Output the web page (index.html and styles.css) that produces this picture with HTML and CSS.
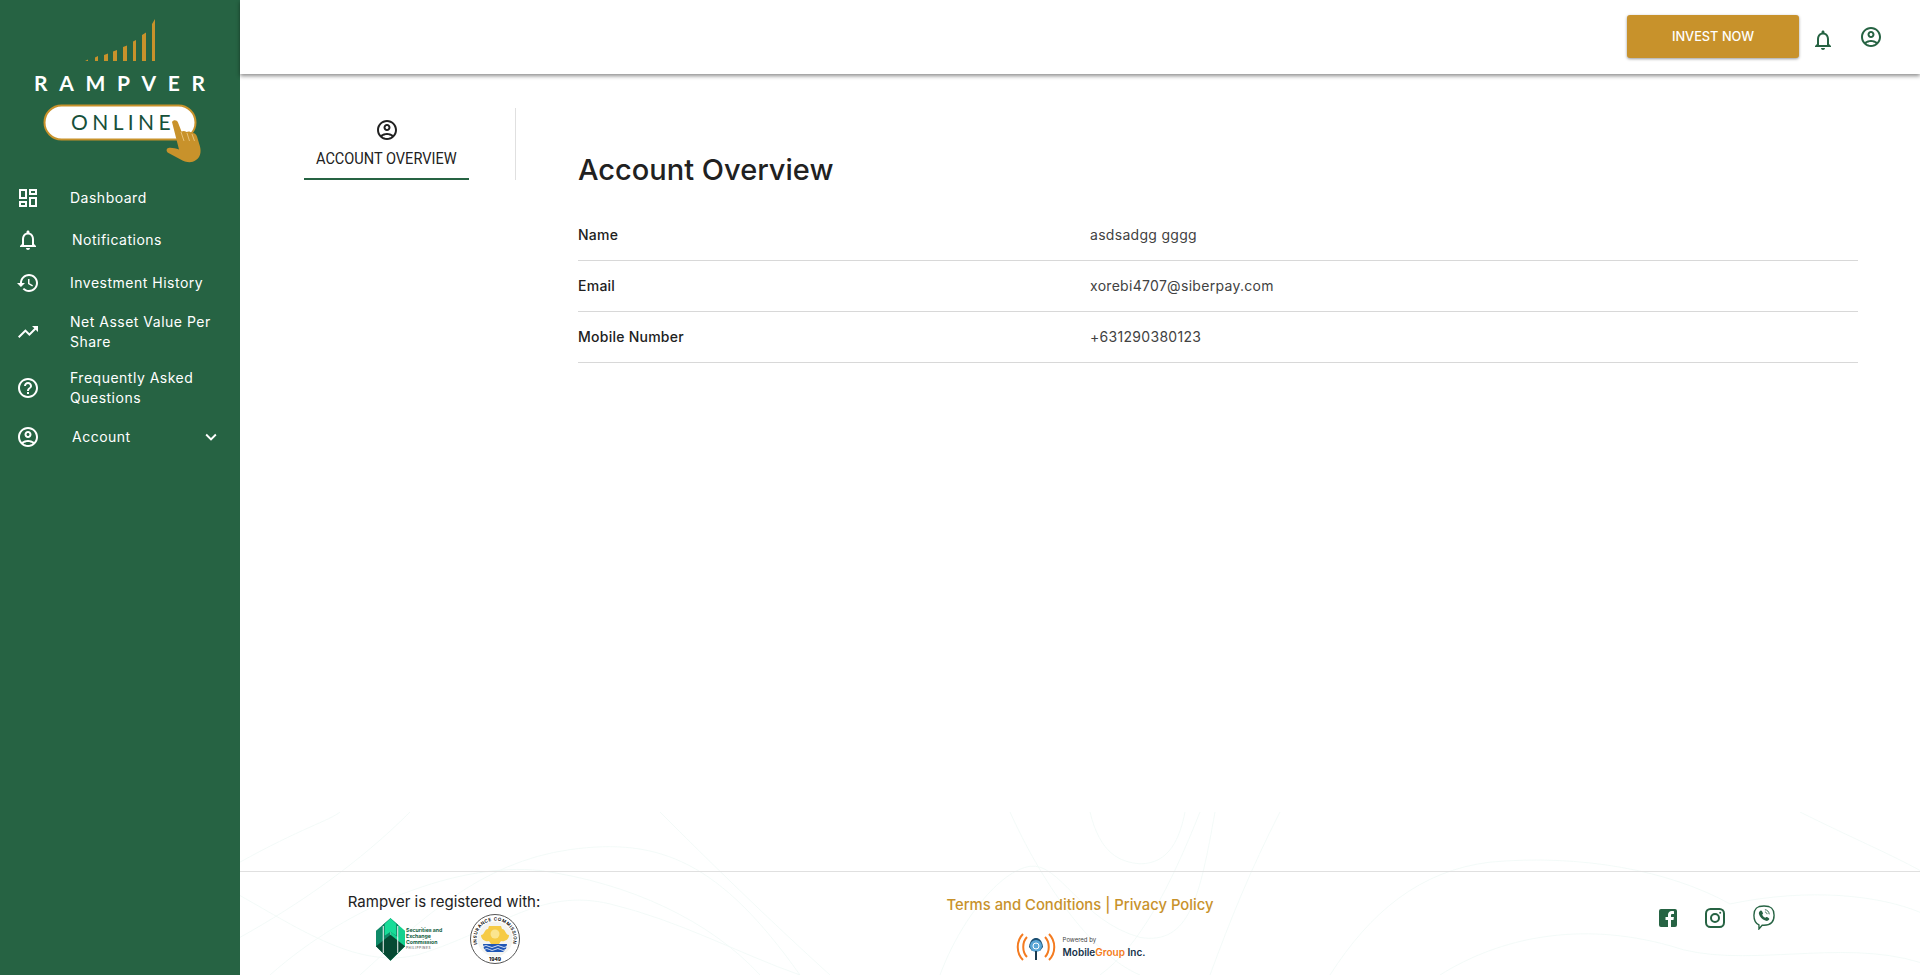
FILE: index.html
```html
<!DOCTYPE html>
<html lang="en">

<head>
    <meta charset="utf-8">
    <title>Account Overview</title>
    <link rel="stylesheet" href="styles.css">
</head>

<body>
<svg class="icon-defs" width="0" height="0">
    <symbol id="i-dashboard" viewBox="0 0 24 24"><path d="M19 5v2h-4V5h4M9 5v6H5V5h4m10 8v6h-4v-6h4M9 17v2H5v-2h4M21 3h-8v6h8V3zM11 3H3v10h8V3zm10 8h-8v10h8V11zm-10 4H3v6h8v-6z"/></symbol>
    <symbol id="i-bell" viewBox="0 0 24 24"><path d="M12 22c1.1 0 2-.9 2-2h-4c0 1.1.9 2 2 2zm6-6v-5c0-3.07-1.63-5.64-4.5-6.32V4c0-.83-.67-1.5-1.5-1.5s-1.5.67-1.5 1.5v.68C7.64 5.36 6 7.92 6 11v5l-2 2v1h16v-1l-2-2zm-2 1H8v-6c0-2.48 1.51-4.5 4-4.5s4 2.02 4 4.5v6z"/></symbol>
    <symbol id="i-history" viewBox="0 0 24 24"><path d="M13 3c-4.97 0-9 4.03-9 9H1l3.89 3.89.07.14L9 12H6c0-3.87 3.13-7 7-7s7 3.13 7 7-3.13 7-7 7c-1.93 0-3.68-.79-4.94-2.06l-1.42 1.42C8.27 19.99 10.51 21 13 21c4.97 0 9-4.03 9-9s-4.03-9-9-9zm-1 5v5l4.28 2.54.72-1.21-3.5-2.08V8H12z"/></symbol>
    <symbol id="i-trend" viewBox="0 0 24 24"><path d="M16 6l2.29 2.29-4.88 4.88-4-4L2 16.59 3.41 18l6-6 4 4 6.3-6.29L22 12V6z"/></symbol>
    <symbol id="i-help" viewBox="0 0 24 24"><path d="M11 18h2v-2h-2v2zm1-16C6.48 2 2 6.48 2 12s4.48 10 10 10 10-4.48 10-10S17.52 2 12 2zm0 18c-4.41 0-8-3.59-8-8s3.59-8 8-8 8 3.59 8 8-3.59 8-8 8zm0-14c-2.21 0-4 1.79-4 4h2c0-1.1.9-2 2-2s2 .9 2 2c0 2-3 1.75-3 5h2c0-2.25 3-2.5 3-5 0-2.21-1.79-4-4-4z"/></symbol>
    <symbol id="i-account" viewBox="0 0 24 24"><path d="M12 2C6.48 2 2 6.48 2 12s4.48 10 10 10 10-4.48 10-10S17.52 2 12 2zM7.35 18.5C8.66 17.56 10.26 17 12 17s3.34.56 4.65 1.5C15.34 19.44 13.74 20 12 20s-3.34-.56-4.65-1.5zm10.79-1.38C16.45 15.8 14.32 15 12 15s-4.45.8-6.14 2.12C4.7 15.73 4 13.95 4 12c0-4.42 3.58-8 8-8s8 3.58 8 8c0 1.95-.7 3.73-1.86 5.12z"/><path d="M12 6c-1.93 0-3.5 1.57-3.5 3.5S10.07 13 12 13s3.5-1.57 3.5-3.5S13.93 6 12 6zm0 5c-.83 0-1.5-.67-1.5-1.5S11.17 8 12 8s1.5.67 1.5 1.5S12.83 11 12 11z"/></symbol>
    <symbol id="i-chevron" viewBox="0 0 24 24"><path d="M16.59 8.59L12 13.17 7.41 8.59 6 10l6 6 6-6z"/></symbol>
</svg>

<aside class="sidebar">
    <svg class="logo" width="240" height="177" viewBox="0 0 240 177">
        <g fill="#c8922b">
            <path d="M85 61l3-1.500V61zM95 61v-3.500l3-1.500V61zM104 61v-6l4-1.500V61zM113 61v-9.500l4-1.500V61zM123 61V47l4-1.500V61zM133 61V41.500l3-1.500V61zM142 61V35l4-2.500V61zM152 61V24l3-5V61z"/>
        </g>
        <text class="logo-brand" x="34" y="90.500">RAMPVER</text>
        <rect x="44.500" y="105.500" width="151" height="34" rx="17" fill="#fff" stroke="#c8922b" stroke-width="2"/>
        <text class="logo-online" x="71" y="130">ONLINE</text>
        <path fill="#c8922b" d="M172 122c1.500-2.500 5-2 6 .5l3.500 9c2-1 3.500-.5 5 .5 2-1 4-.5 5.500 1 2.500-.5 4 1 5 3.500l3 10c1.500 6 0 11-4 13.500-4 3-9 2.500-13.500.5l-14-7.500c-2.500-1.500-2.500-4.500 0-5 3-.5 7 .5 10.500 1.500z"/>
        <path stroke="#e8c27a" stroke-width="1" d="M181 132l3 9M187 133l2.500 8M192 134l2.500 7"/>
    </svg>

    <nav class="menu">
        <a class="menu-item"><svg class="menu-icon"><use href="#i-dashboard"/></svg><span>Dashboard</span></a>
        <a class="menu-item menu-item-shift"><svg class="menu-icon"><use href="#i-bell"/></svg><span>Notifications</span></a>
        <a class="menu-item menu-item-gap"><svg class="menu-icon"><use href="#i-history"/></svg><span>Investment History</span></a>
        <a class="menu-item"><svg class="menu-icon"><use href="#i-trend"/></svg><span>Net Asset Value Per Share</span></a>
        <a class="menu-item"><svg class="menu-icon"><use href="#i-help"/></svg><span>Frequently Asked Questions</span></a>
        <a class="menu-item menu-item-shift"><svg class="menu-icon"><use href="#i-account"/></svg><span>Account</span><svg class="menu-chevron"><use href="#i-chevron"/></svg></a>
    </nav>
</aside>

<div class="main">
    <svg class="contours" viewBox="0 0 1680 195" width="1680" height="163" preserveAspectRatio="none" fill="none">
        <path d="M0 60C60 20 90 10 100 0M120 195C180 130 240 60 330 45 420 30 480 60 560 195"/>
        <path d="M30 195C110 110 220 60 300 70 390 85 470 130 520 195"/>
        <path d="M0 100C60 140 120 190 180 170 260 140 300 90 370 110 440 130 500 170 560 195"/>
        <path d="M420 0C470 60 530 130 590 195M170 0C120 60 60 110 0 150"/>
        <path d="M770 0C800 80 850 170 900 195M850 0C860 50 880 60 900 62 930 62 940 30 945 0M960 0C930 90 900 160 860 195"/>
        <path d="M1040 0C1010 70 990 130 970 195M700 195C720 130 760 70 790 65 820 60 840 130 900 150 950 160 960 100 975 0"/>
        <path d="M1090 195C1130 120 1180 70 1250 60 1340 50 1430 70 1490 110 1570 90 1640 100 1680 120M1200 195C1260 150 1340 130 1430 160 1500 190 1600 150 1680 180"/>
        <path d="M1560 0C1610 30 1650 50 1680 70"/>
    </svg>

    <header class="topbar">
        <button class="invest-btn">INVEST NOW</button>
        <svg class="topbar-icon topbar-bell"><use href="#i-bell"/></svg>
        <svg class="topbar-icon topbar-user"><use href="#i-account"/></svg>
    </header>

    <div class="content">
        <div class="tabs">
            <div class="tab tab-active">
                <svg class="tab-icon"><use href="#i-account"/></svg>
                <span class="tab-label">ACCOUNT OVERVIEW</span>
            </div>
        </div>

        <section class="overview">
            <h1 class="overview-title">Account Overview</h1>
            <div class="row"><span class="row-label">Name</span><span class="row-value">asdsadgg gggg</span></div>
            <div class="row"><span class="row-label">Email</span><span class="row-value">xorebi4707@siberpay.com</span></div>
            <div class="row"><span class="row-label">Mobile Number</span><span class="row-value">+631290380123</span></div>
        </section>
    </div>

    <footer class="footer">
        <div class="footer-reg">
            <p class="reg-title">Rampver is registered with:</p>
            <div class="reg-logos">
                <div class="sec-logo">
                    <svg width="29" height="43" viewBox="0 0 30 44">
                        <path fill="#0f8a68" d="M0 13L15 0v44L0 29z"/>
                        <path fill="#14d18f" d="M15 0l15 13v16L15 44z"/>
                        <path fill="#0c7a5c" d="M7 7l8-7 8 7v13l-8-6-8 6z"/>
                        <path fill="#18dc98" d="M9 6l6-6 6 6v12l-6-4-6 4z"/>
                        <path fill="#064a33" d="M0 29l15-12 15 12-15 15z"/>
                        <path fill="#fff" d="M7 8h1v28H7zM22 8h1v28h-1z"/>
                    </svg>
                    <span class="sec-text">Securities and<br>Exchange<br>Commission<em>PHILIPPINES</em></span>
                </div>
                <svg class="ic-seal" width="50" height="50" viewBox="0 0 50 50">
                    <defs>
                        <path id="seal-arc" d="M10.100 36A18.500 18.500 0 1 1 39.900 36"/>
                    </defs>
                    <circle cx="25" cy="25" r="24.500" fill="#fff" stroke="#555"/>
                    <circle cx="25" cy="25" r="17.500" fill="#f4f4f0"/>
                    <text class="seal-ring"><textPath href="#seal-arc" startOffset="50%">INSURANCE COMMISSION</textPath></text>
                    <path fill="#f6cb45" d="M19 12h12l1 3c4 0 3 6 7 6 0 5-5 7-8 6l-2 3h-8l-2-3c-3 1-8-1-8-6 4 0 3-6 7-6z"/>
                    <circle cx="25" cy="20" r="4.500" fill="#fbe58f"/>
                    <path fill="#1f56b5" d="M13 30h24l-1 5-3 3H17l-3-3z"/>
                    <path fill="none" stroke="#fff" stroke-width=".8" d="M13 32.500q3-2 6 0t6 0 6 0 6 0M14 35.500q3-2 5.500 0t5.500 0 5.500 0 5.500 0"/>
                    <text class="seal-year" x="25" y="46.500">1949</text>
                </svg>
            </div>
        </div>

        <div class="footer-mid">
            <p class="legal"><a>Terms and Conditions</a> | <a>Privacy Policy</a></p>
            <div class="powered">
                <svg width="42" height="28" viewBox="0 0 42 28" fill="none">
                    <path stroke="#f47b20" stroke-width="2" d="M8 1C1 8 1 20 8 27M12 4C7 9 7 19 12 24M34 1c7 7 7 19 0 26M30 4c5 5 5 15 0 20"/>
                    <path fill="#1b4f72" d="M14 14c1-7 4-9 7-9s6 2 7 9l-3 4-8 0z"/>
                    <circle cx="21" cy="13" r="6" fill="#5aa6d6"/>
                    <circle cx="21" cy="13" r="3" fill="none" stroke="#fff"/>
                    <path fill="#1b3a50" d="M20 18h2v9h-2z"/>
                </svg>
                <div class="powered-text">
                    <span class="powered-by">Powered by</span>
                    <span class="powered-name">Mobile<b>Group</b> Inc.</span>
                </div>
            </div>
        </div>

        <div class="footer-social">
            <svg width="18" height="18" viewBox="0 0 18 18">
                <path fill="#266343" d="M2 0h14a2 2 0 0 1 2 2v14a2 2 0 0 1-2 2h-4v-7h2.500l.4-3H12V6.300c0-.9.300-1.400 1.500-1.400H15V2.200c-.5-.1-1.300-.2-2.200-.2C10.600 2 9 3.300 9 5.800V8H6.500v3H9v7H2a2 2 0 0 1-2-2V2a2 2 0 0 1 2-2z"/>
            </svg>
            <svg width="20" height="20" viewBox="0 0 20 20" fill="none" stroke="#266343" stroke-width="2">
                <rect x="1" y="1" width="18" height="18" rx="4.500"/>
                <circle cx="10" cy="10" r="4"/>
                <circle cx="15.200" cy="4.800" r="1" fill="#266343" stroke="none"/>
            </svg>
            <svg class="viber" width="22" height="25" viewBox="0 0 24 27" fill="none">
                <path stroke="#266343" stroke-width="1.500" d="M12 1c8 0 11 3 11 10s-3 11-11 11h-2l-3.500 4v-4.500C3 20 1 17 1 11 1 4 4 1 12 1z"/>
                <path fill="#266343" d="M8 6c1-.5 1.500 0 2 1l.8 1.500c.3.7 0 1.200-.8 1.800.5 1.500 1.700 2.800 3.500 3.500.6-.8 1.100-1.100 1.800-.8l1.700 1c.9.500 1 1.200.4 2-1 1.300-2.400 1.500-4 .8C10 15.500 7.500 13 6.600 10c-.5-1.700 0-3 1.400-4z"/>
                <path stroke="#266343" d="M13 5c2.500.2 4.500 2 4.700 5M13 7.500c1.300.1 2.200 1.100 2.300 2.400"/>
            </svg>
        </div>
    </footer>
</div>
</body>

</html>
```

FILE: styles.css
```css
* {
    box-sizing: border-box;
}

body {
    margin: 0;
    height: 975px;
    display: flex;
    overflow: hidden;
    background: #FFFFFF;
    color: #212121;
    font-family: "Inter", "Open Sans", sans-serif;
}

p, h1 {
    margin: 0;
}

.icon-defs {
    position: absolute;
}

/* sidebar */
.sidebar {
    width: 240px;
    flex: none;
    background: #266343;
    color: #FFFFFF;
}

.logo {
    display: block;
}

.logo-brand {
    fill: #FFFFFF;
    font-family: "Lato", sans-serif;
    font-size: 21px;
    font-weight: 700;
    letter-spacing: 11.7px;
}

.logo-online {
    fill: #16503A;
    font-family: "Lato", sans-serif;
    font-size: 21px;
    letter-spacing: 4.4px;
}

.menu-item {
    display: flex;
    align-items: center;
    min-height: 42px;
    padding: 8px 0 8px 16px;
    font-size: 14px;
    font-weight: 400;
    line-height: 20px;
    letter-spacing: 0.5px;
}

.menu-item-gap {
    margin-top: 1px;
}

.menu-item > span {
    width: 150px;
    margin-left: 30px;
}

.menu-item-shift > span {
    margin-left: 32px;
}

.menu-icon {
    width: 24px;
    height: 24px;
    flex: none;
    fill: #FFFFFF;
}

.menu-chevron {
    width: 22px;
    height: 22px;
    margin-left: -22px;
    fill: #FFFFFF;
}

/* main column */
.main {
    position: relative;
    flex: 1;
    display: flex;
    flex-direction: column;
    min-width: 0;
}

.contours {
    position: absolute;
    left: 0;
    bottom: 0;
    stroke: #F2FAF7;
}

.topbar {
    position: relative;
    height: 74px;
    flex: none;
    display: flex;
    align-items: flex-start;
    padding: 15px 0 0 1387px;
    background: #FFFFFF;
    box-shadow: 0 2px 4px rgba(0, 0, 0, 0.45);
}

.invest-btn {
    width: 172px;
    height: 43px;
    padding-bottom: 2px;
    border: 0;
    border-radius: 3px;
    background: #C8922B;
    color: #FFFFFF;
    font-family: inherit;
    font-size: 12.8px;
    font-weight: 500;
    box-shadow: 0 1px 3px rgba(0, 0, 0, 0.4);
}

.topbar-icon {
    width: 24px;
    height: 24px;
    fill: #266343;
}

.topbar-bell {
    margin: 13px 0 0 12px;
}

.topbar-user {
    margin: 10px 0 0 24px;
}

.content {
    position: relative;
    flex: 1;
    display: flex;
    padding: 34px 62px 0 61px;
}

.tabs {
    width: 215px;
    height: 72px;
    flex: none;
    padding-left: 3px;
    border-right: 1px solid #E0E0E0;
}

.tab {
    width: 165px;
    height: 72px;
    display: flex;
    flex-direction: column;
    align-items: center;
    padding-top: 10px;
    border-bottom: 2px solid #266343;
}

.tab-icon {
    width: 24px;
    height: 24px;
    flex: none;
    fill: #212121;
}

.tab-label {
    margin-top: 6px;
    font-family: "Roboto", sans-serif;
    font-size: 16px;
    line-height: 21px;
    transform: scaleX(0.91);
    white-space: nowrap;
}

.overview {
    flex: 1;
    margin-left: 62px;
    padding-top: 45px;
}

.overview-title {
    margin-bottom: 23px;
    font-size: 29px;
    font-weight: 500;
    line-height: 34px;
}

.row {
    display: flex;
    align-items: center;
    height: 51px;
    padding-bottom: 2px;
    border-bottom: 1px solid #D8D8D8;
    font-size: 14px;
}

.row-label {
    width: 512px;
    font-weight: 500;
    letter-spacing: 0.25px;
}

.row-value {
    color: #424242;
    letter-spacing: 0.3px;
}

/* footer */
.footer {
    position: relative;
    height: 104px;
    flex: none;
    display: grid;
    grid-template-columns: 408px 1fr 408px;
    border-top: 1px solid #E0E0E0;
}

.footer-reg {
    display: flex;
    flex-direction: column;
    align-items: center;
    padding-top: 20px;
}

.reg-title {
    font-size: 15px;
    line-height: 20px;
}

.reg-logos {
    display: flex;
    align-items: center;
    gap: 25px;
    margin: 2px 0 0 8px;
}

.sec-logo {
    display: flex;
    align-items: center;
    gap: 1px;
}

.sec-text {
    width: 39px;
    color: #0F5C40;
    font-size: 5.2px;
    font-weight: 700;
    line-height: 6px;
    white-space: nowrap;
}

.sec-text em {
    display: block;
    color: #888888;
    font-size: 3px;
    font-style: normal;
    letter-spacing: 0.6px;
}

.seal-ring {
    font-size: 4.5px;
    font-weight: 600;
    letter-spacing: 0.5px;
    text-anchor: middle;
}

.seal-year {
    font-size: 5px;
    font-weight: 700;
    text-anchor: middle;
}

.footer-mid {
    display: flex;
    flex-direction: column;
    align-items: center;
    padding-top: 22px;
}

.legal {
    color: #C8922B;
    font-size: 14.8px;
    font-weight: 500;
    line-height: 22px;
}

.powered {
    display: flex;
    align-items: center;
    gap: 6px;
    margin-top: 17px;
}

.powered-text {
    display: flex;
    flex-direction: column;
}

.powered-by {
    color: #444444;
    font-size: 6px;
    line-height: 10px;
}

.powered-name {
    color: #16324A;
    font-size: 10px;
    font-weight: 600;
    line-height: 14px;
}

.powered-name b {
    color: #F47B20;
    font-weight: 600;
}

.footer-social {
    display: flex;
    align-items: center;
    justify-content: center;
    gap: 28px;
    padding: 0 0 12px 2px;
}
```
